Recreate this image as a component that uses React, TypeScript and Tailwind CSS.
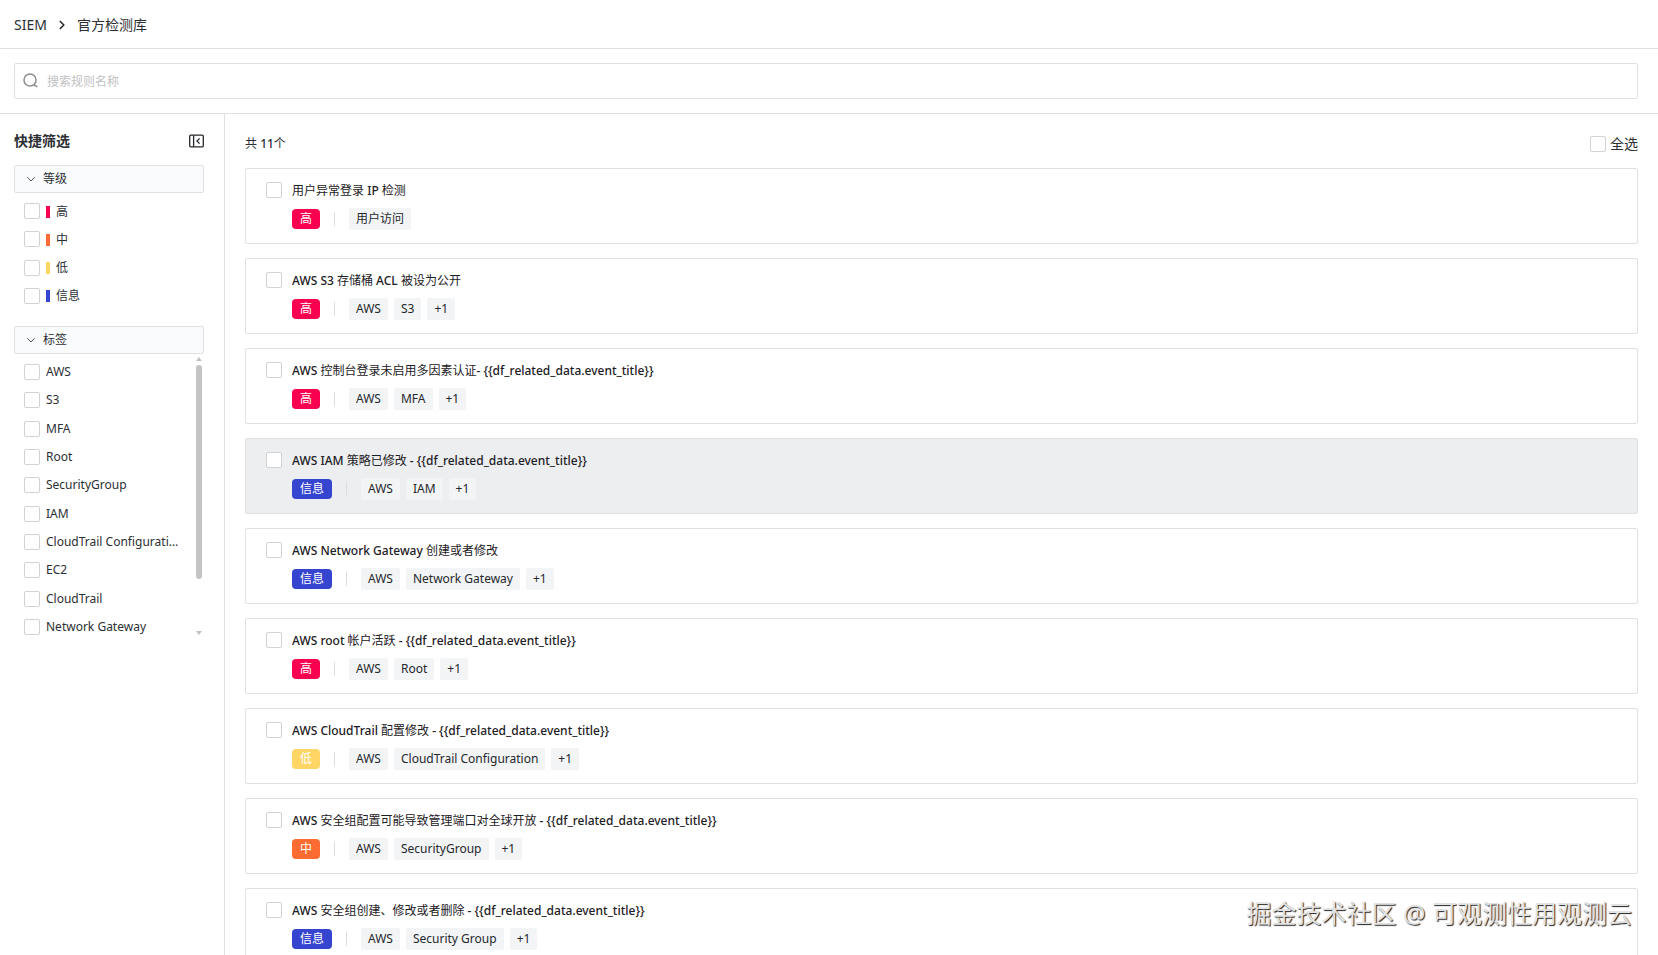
import React from "react";

type Level = "high" | "medium" | "low" | "info";

const LEVELS: Record<Level, { label: string; fill: string }> = {
  high: { label: "高", fill: "bg-[#fa0050]" },
  medium: { label: "中", fill: "bg-[#fc6b31]" },
  low: { label: "低", fill: "bg-[#ffd666]" },
  info: { label: "信息", fill: "bg-[#3545d0]" },
};

const LEVEL_ORDER: Level[] = ["high", "medium", "low", "info"];

const TAGS = [
  "AWS",
  "S3",
  "MFA",
  "Root",
  "SecurityGroup",
  "IAM",
  "CloudTrail Configuration",
  "EC2",
  "CloudTrail",
  "Network Gateway",
];

interface Rule {
  title: string;
  level: Level;
  tags: string[];
  hovered?: boolean;
}

const RULES: Rule[] = [
  { title: "用户异常登录 IP 检测", level: "high", tags: ["用户访问"] },
  { title: "AWS S3 存储桶 ACL 被设为公开", level: "high", tags: ["AWS", "S3", "+1"] },
  { title: "AWS 控制台登录未启用多因素认证- {{df_related_data.event_title}}", level: "high", tags: ["AWS", "MFA", "+1"] },
  { title: "AWS IAM 策略已修改 - {{df_related_data.event_title}}", level: "info", tags: ["AWS", "IAM", "+1"], hovered: true },
  { title: "AWS Network Gateway 创建或者修改", level: "info", tags: ["AWS", "Network Gateway", "+1"] },
  { title: "AWS root 帐户活跃 - {{df_related_data.event_title}}", level: "high", tags: ["AWS", "Root", "+1"] },
  { title: "AWS CloudTrail 配置修改 - {{df_related_data.event_title}}", level: "low", tags: ["AWS", "CloudTrail Configuration", "+1"] },
  { title: "AWS 安全组配置可能导致管理端口对全球开放 - {{df_related_data.event_title}}", level: "medium", tags: ["AWS", "SecurityGroup", "+1"] },
  { title: "AWS 安全组创建、修改或者删除 - {{df_related_data.event_title}}", level: "info", tags: ["AWS", "Security Group", "+1"] },
];

function Checkbox({ id }: { id: string }) {
  return (
    <input
      id={id}
      type="checkbox"
      className="size-4 shrink-0 appearance-none rounded-xs border border-[#d0d2d4] bg-white checked:bg-[#3545d0]"
    />
  );
}

function GroupHeader({ label }: { label: string }) {
  return (
    <button
      type="button"
      className="flex h-7 w-full items-center gap-2 rounded-xs border border-[#dfe1e4] bg-[#f9fbfd] pl-3 text-left"
    >
      <svg className="size-2 text-[#55585c]" viewBox="0 0 8 8" fill="none" stroke="currentColor" aria-hidden="true">
        <path d="M0.3 2.2 4 6 7.7 2.2" />
      </svg>
      {label}
    </button>
  );
}

function Sidebar() {
  return (
    <aside className="w-[225px] shrink-0 border-r border-[#dedfe0] pt-[15px] pr-5 pl-3.5">
      <div className="mb-3 flex h-6 items-center justify-between">
        <h2 className="text-sm font-bold">快捷筛选</h2>
        <button type="button" aria-label="收起">
          <svg className="h-3.5 w-[15px]" viewBox="0 0 15 14" fill="none" stroke="#25282c" strokeWidth="1.3" aria-hidden="true">
            <rect x="0.7" y="1.2" width="13.6" height="11.6" rx="1" />
            <path d="M4.6 1.2v11.6M10.6 4.4 8 7l2.6 2.6" />
          </svg>
        </button>
      </div>

      <GroupHeader label="等级" />
      <ul className="mb-4 flex h-[117px] flex-col justify-between pt-1 pl-2.5">
        {LEVEL_ORDER.map((level) => (
          <li key={level} className="flex h-7 items-center gap-1.5">
            <Checkbox id={`level-${level}`} />
            <label htmlFor={`level-${level}`} className="flex items-center gap-1.5 pt-px">
              <span className={`h-3 w-1 ${LEVELS[level].fill}`} />
              {LEVELS[level].label}
            </label>
          </li>
        ))}
      </ul>

      <GroupHeader label="标签" />
      <div className="flex justify-between">
        <ul className="flex h-[287px] min-w-0 flex-col justify-between pt-1 pl-2.5">
          {TAGS.map((tag) => (
            <li key={tag} className="flex h-7 items-center gap-1.5">
              <Checkbox id={`tag-${tag}`} />
              <label htmlFor={`tag-${tag}`} className="w-[136px] truncate">
                {tag}
              </label>
            </li>
          ))}
        </ul>
        <div className="mr-0.5 flex w-1.5 shrink-0 flex-col items-center pt-[3px] pb-1.5" aria-hidden="true">
          <svg className="h-1 w-1.5" viewBox="0 0 6 4" fill="#c2c2c2">
            <path d="M3 0 6 4H0z" />
          </svg>
          <div className="mt-1 h-[214px] w-1.5 rounded-full bg-[#c4c4c4]" />
          <svg className="mt-auto h-1 w-1.5" viewBox="0 0 6 4" fill="#c2c2c2">
            <path d="M3 4 0 0h6z" />
          </svg>
        </div>
      </div>
    </aside>
  );
}

/** Latin runs are set in medium weight, Chinese runs stay regular. */
function MixedTitle({ text }: { text: string }) {
  return text.split(/([\x20-\x7e]+)/).map((run, i) =>
    i % 2 === 1 ? (
      <span key={i} className="font-medium">
        {run}
      </span>
    ) : (
      run
    ),
  );
}

function RuleCard({ rule, index }: { rule: Rule; index: number }) {
  const level = LEVELS[rule.level];
  return (
    <li
      className={`flex gap-2.5 rounded-xs border border-[#dfe0e2] px-5 py-[13px] ${
        rule.hovered ? "bg-[#eceef0]" : "bg-white"
      }`}
    >
      <Checkbox id={`rule-${index}`} />
      <div className="min-w-0">
        <label htmlFor={`rule-${index}`} className="block h-[18px] truncate leading-[18px] text-[#1d2024]">
          <MixedTitle text={rule.title} />
        </label>
        <div className="mt-2 flex h-[22px] items-center">
          <span className={`flex h-5 items-center rounded-sm px-2 text-white ${level.fill}`}>{level.label}</span>
          <span className="mx-3.5 h-3.5 w-px bg-[#dcdee0]" />
          <ul className="flex gap-1.5">
            {rule.tags.map((tag) => (
              <li key={tag} className="flex h-[22px] items-center rounded-xs bg-[#f3f4f6] px-[7px] text-[#25282c]">
                {tag}
              </li>
            ))}
          </ul>
        </div>
      </div>
    </li>
  );
}

export default function App() {
  return (
    <div className="relative flex h-screen flex-col overflow-hidden bg-white font-['Noto_Sans','Noto_Sans_CJK_SC',sans-serif] text-xs text-[#2c2f33]">
      <header className="flex h-[49px] shrink-0 items-center border-b border-[#dfe0e1] px-3.5 pt-0.5 text-sm">
        <nav className="flex items-center gap-3">
          <a href="#siem">SIEM</a>
          <svg className="h-2.5 w-1.5" viewBox="0 0 6 10" fill="none" stroke="#25282c" strokeWidth="1.5" aria-hidden="true">
            <path d="M0.8 1 4.8 5 0.8 9" />
          </svg>
          <span>官方检测库</span>
        </nav>
      </header>

      <div className="shrink-0 border-b border-[#dfe0e1] py-3.5 pr-5 pl-3.5">
        <label className="flex h-9 items-center gap-2 rounded-xs border border-[#dfe0e2] px-2">
          <svg className="size-4" viewBox="0 0 16 16" fill="none" stroke="#8b8d90" strokeWidth="1.5" aria-hidden="true">
            <circle cx="7" cy="7" r="6" />
            <path d="M10.6 12.6h1.8l2 1.4" />
          </svg>
          <input
            type="text"
            aria-label="搜索规则名称"
            placeholder="搜索规则名称"
            className="min-w-0 flex-1 bg-transparent pt-0.5 outline-none placeholder:text-[#bfc1c3]"
          />
        </label>
      </div>

      <div className="flex min-h-0 flex-1">
        <Sidebar />
        <main className="min-w-0 flex-1 overflow-hidden px-5 pt-[18px]">
          <div className="mb-3 flex h-6 items-center justify-between">
            <p>
              共 <span className="font-medium">11</span>个
            </p>
            <div className="flex items-center gap-1 text-sm">
              <Checkbox id="select-all" />
              <label htmlFor="select-all">全选</label>
            </div>
          </div>
          <ul className="flex flex-col gap-3.5">
            {RULES.map((rule, index) => (
              <RuleCard key={rule.title} rule={rule} index={index} />
            ))}
          </ul>
        </main>
      </div>

      <p className="pointer-events-none absolute right-[26px] bottom-6 text-[25px] leading-9 text-[#e2e2e2] [text-shadow:1px_1px_1px_#222]">
        掘金技术社区 @ 可观测性用观测云
      </p>
    </div>
  );
}
